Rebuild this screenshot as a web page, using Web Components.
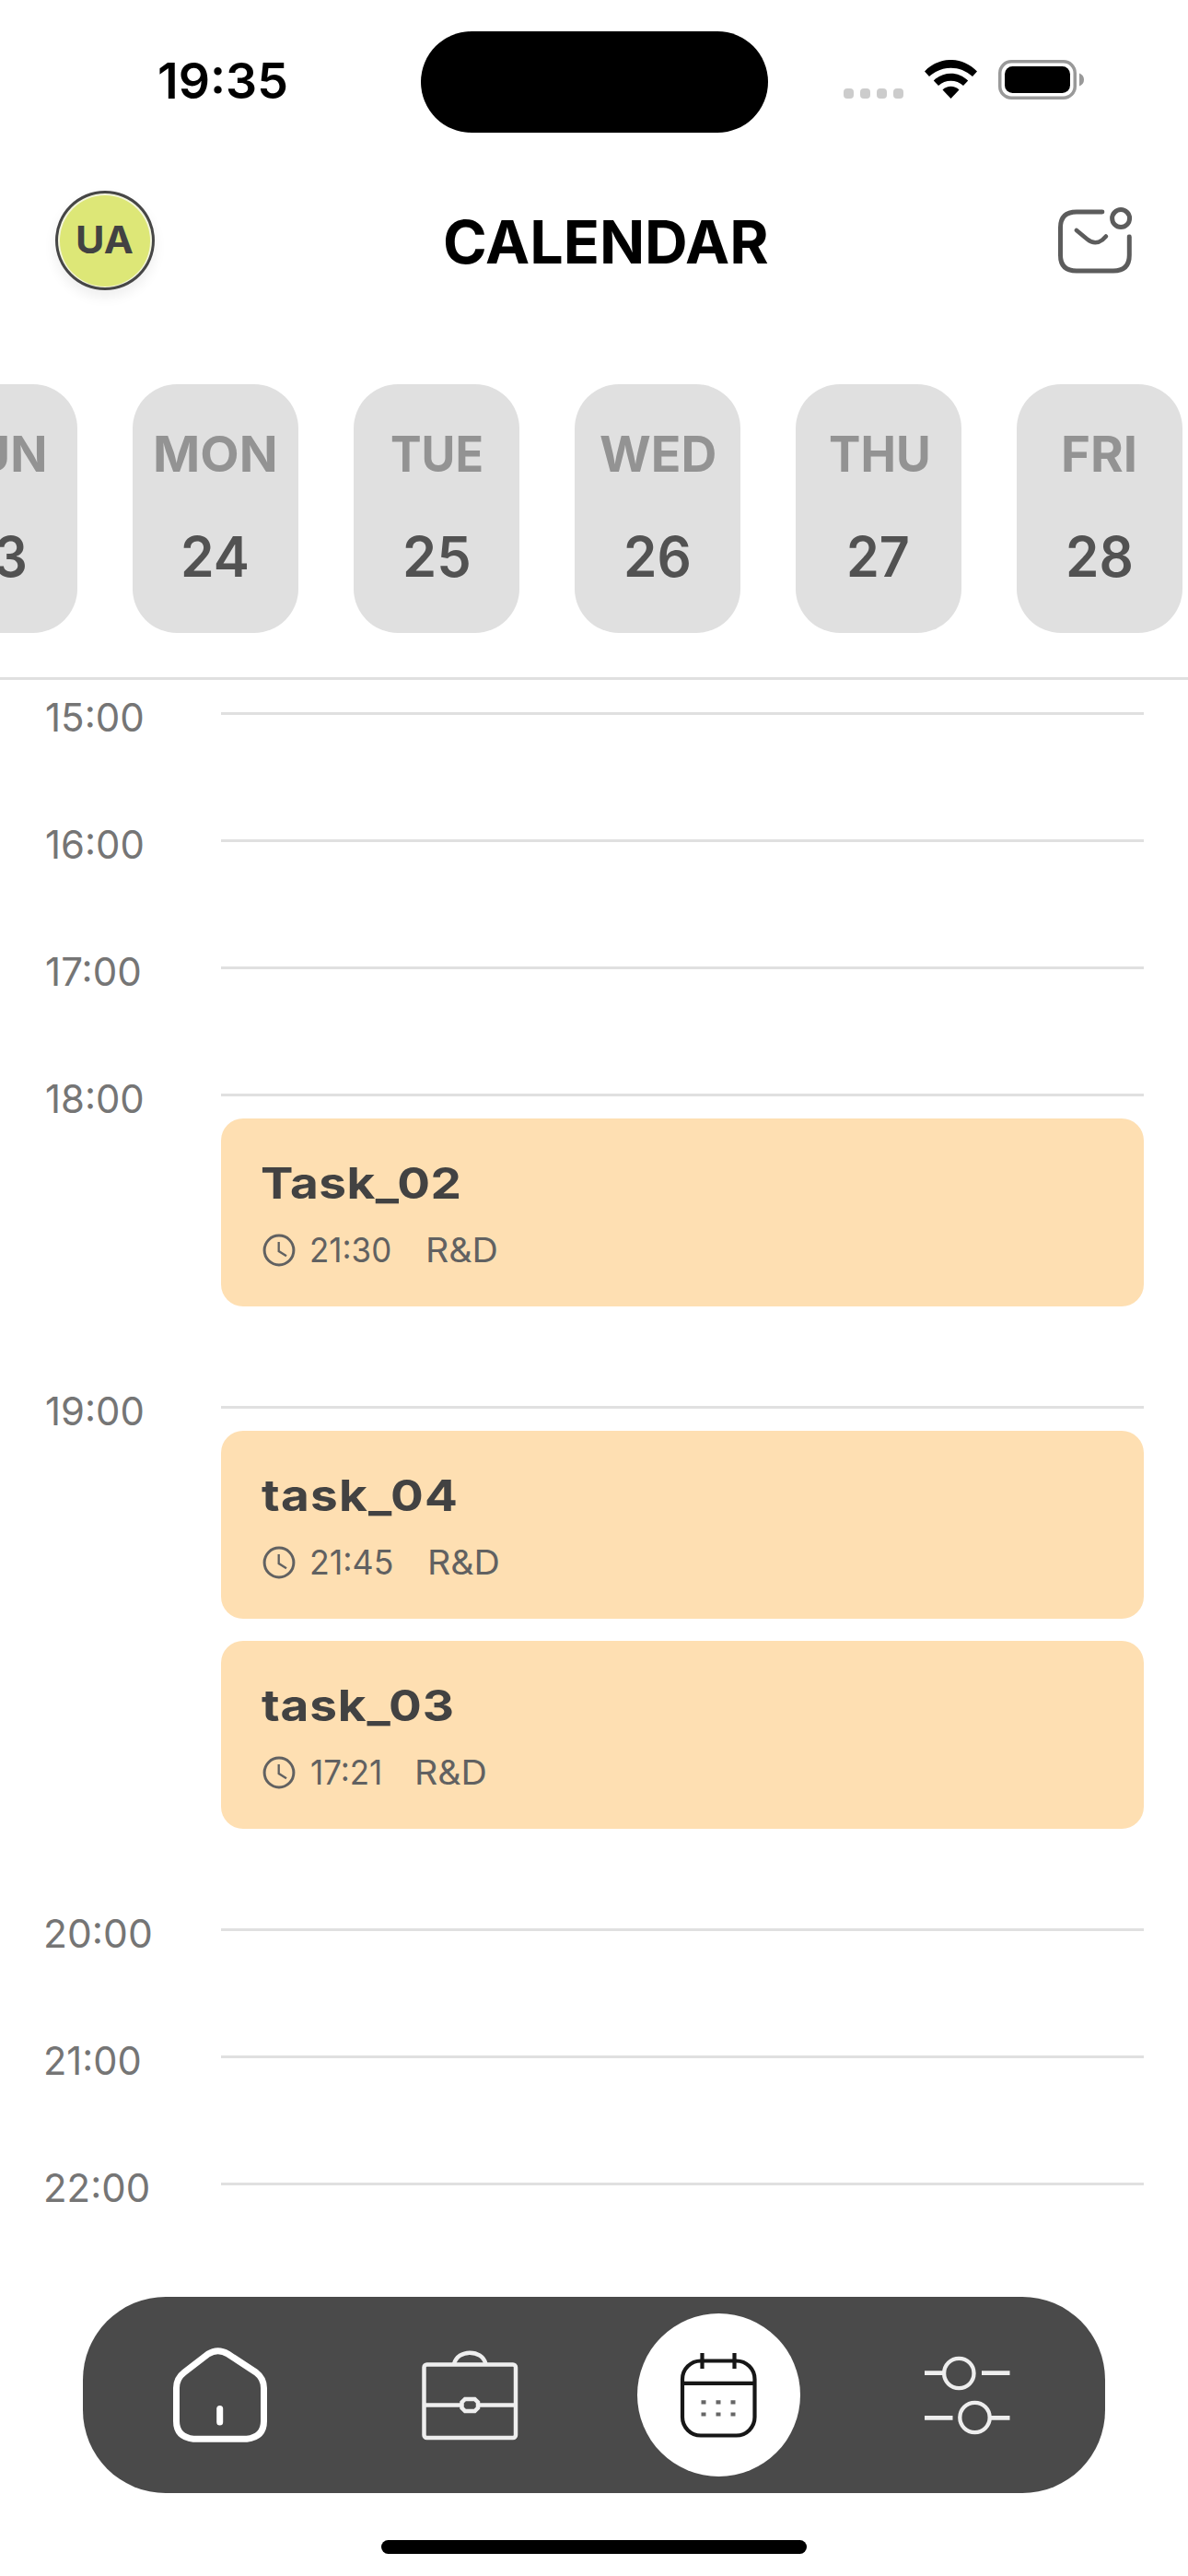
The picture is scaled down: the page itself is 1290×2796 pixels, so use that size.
<!DOCTYPE html>
<html lang="en">
<head>
<meta charset="utf-8">
<title>Calendar</title>
<style>
html,body{margin:0;padding:0;background:#fff}
body{width:1290px;height:2796px;overflow:hidden;font-family:Inter,"Noto Sans",sans-serif;color:#000}
</style>
</head>
<body>
<calendar-screen></calendar-screen>
<script>
const define = (name, html, setup) => {
  const template = document.createElement('template');
  template.innerHTML = html;
  customElements.define(name, class extends HTMLElement {
    connectedCallback() {
      if (this.shadowRoot) return;
      this.attachShadow({ mode: 'open' }).append(template.content.cloneNode(true));
      if (setup) setup(this, this.shadowRoot);
    }
  });
};

// Fits a label so that its visible glyphs span exactly the "w" attribute:
// the glyphs are widened by up to 13%, and tracking takes up the rest.
const ruler = document.createElement('canvas').getContext('2d');
define('fitted-text', `
<style>:host{display:block;white-space:nowrap;line-height:1;flex:none}span{display:block;transform-origin:0 50%}</style>
<span></span>`, (host, root) => {
  const text = host.getAttribute('text'), w = +host.getAttribute('w');
  const span = root.querySelector('span');
  span.textContent = text;
  host.style.width = w + 'px';
  const cs = getComputedStyle(host);
  ruler.font = `${cs.fontWeight} ${cs.fontSize} ${cs.fontFamily}`;
  const m = ruler.measureText(text);
  const ink = m.actualBoundingBoxLeft + m.actualBoundingBoxRight;
  const scale = Math.max(0.94, Math.min(1.13, w / ink));
  span.style.letterSpacing = (w / scale - ink) / (text.length - 1) + 'px';
  span.style.marginLeft = m.actualBoundingBoxLeft * scale + 'px';
  span.style.transform = `scaleX(${scale})`;
});
const fitted = (text, w, cls = '') => {
  const el = document.createElement('fitted-text');
  el.className = cls;
  el.setAttribute('text', text);
  el.setAttribute('w', w);
  return el;
};

define('status-bar', `
<style>
:host{display:flex;height:143px;padding:34px 0 0 173px;align-items:flex-start}
fitted-text{font-size:54px;font-weight:600;margin-top:27px}
.island{width:377px;height:110px;border-radius:55px;background:#000;margin-left:145.5px}
.dots{display:flex;gap:7px;margin:62px 0 0 82.5px}
.dots i{width:11px;height:11px;border-radius:4px;background:#ccc}
.wifi{margin:31px 0 0 23px}.bat{margin:31px 0 0 23px}
svg{display:block}
</style>
<fitted-text text="19:35" w="138"></fitted-text>
<div class="island"></div>
<div class="dots"><i></i><i></i><i></i><i></i></div>
<svg class="wifi" width="57" height="42" viewBox="0 0 57 42">
<path d="M0 12.5C16-4.2 41-4.2 57 12.5L52 18C38.500 5.500 18.500 5.500 5 18Z"/>
<path d="M9.800 22.500C20.500 12 36.500 12 47.200 22.500L42 28C34.500 21 22.500 21 15 28Z"/>
<path d="M19.500 32.500C24.500 27.500 32.500 27.500 37.500 32.500L28.500 42Z"/></svg>
<svg class="bat" width="94" height="43" viewBox="0 0 94 43">
<rect x="1.750" y="1.750" width="81.500" height="39.500" rx="12.500" fill="none" stroke="#999" stroke-width="3.500"/>
<rect x="7" y="7" width="71" height="29" rx="8.500"/>
<path d="M88 14.500Q93 16.500 93 21.500Q93 26.500 88 28.500Z" fill="#999"/></svg>`);

define('user-avatar', `
<style>
:host{display:flex;box-sizing:border-box;width:108px;height:108px;border:3px solid #464646;border-radius:50%;background:#f3f5db;padding:1.5px;box-shadow:0 7px 14px rgba(0,0,0,.07)}
div{flex:1;display:flex;align-items:center;justify-content:center;border-radius:50%;background:#dde777;color:#424242;font-size:41px;font-weight:700}
fitted-text{margin-top:-1px}
</style><div><fitted-text text="UA" w="60"></fitted-text></div>`);

define('app-header', `
<style>
:host{display:flex;box-sizing:border-box;height:240px;padding:30px 60px 0;align-items:flex-start}
.title{font-size:64px;font-weight:700;margin:23.500px 0 0 315px}
svg{display:block;margin:17px 0 0 315px}
</style>
<user-avatar></user-avatar>
<fitted-text class="title" text="CALENDAR" w="350.500"></fitted-text>
<svg width="82" height="74" viewBox="0 0 82 74" fill="none" stroke="#5c5c5c" stroke-width="5" stroke-linecap="round">
<path d="M49 6H21Q3.500 6 3.500 23V53Q3.500 70 21 70H61Q78.500 70 78.500 53V33"/>
<circle cx="69.300" cy="13" r="9.500"/>
<path d="M21 26L32.500 35.500Q41 42.500 49 36.500L53 32.500" stroke-width="4.600"/></svg>`);

define('day-card', `
<style>
:host{display:flex;flex:none;box-sizing:border-box;width:180px;height:270px;border-radius:48px;background:#e0e0e0;flex-direction:column;align-items:center;padding-top:50px}
.d{font-size:53px;font-weight:700;color:#939393}
.n{font-size:60px;font-weight:600;color:#525252;margin-top:54px}
</style>`, (host, root) => {
  const { day, dw, num, nw } = host.dataset;
  root.append(fitted(day, dw, 'd'), fitted(num, nw, 'n'));
});

define('day-strip', `
<style>
:host{display:flex;box-sizing:border-box;height:321px;border-bottom:3px solid #e0e0e0;overflow:hidden}
.row{display:flex;gap:60px;margin-left:-96px}
</style><div class="row">
<day-card data-day="SUN" data-dw="108" data-num="23" data-nw="67"></day-card>
<day-card data-day="MON" data-dw="129" data-num="24" data-nw="70"></day-card>
<day-card data-day="TUE" data-dw="98" data-num="25" data-nw="69"></day-card>
<day-card data-day="WED" data-dw="124" data-num="26" data-nw="68.500"></day-card>
<day-card data-day="THU" data-dw="107" data-num="27" data-nw="64.500"></day-card>
<day-card data-day="FRI" data-dw="77" data-num="28" data-nw="68.500"></day-card>
</div>`);

define('task-card', `
<style>
:host{display:block;box-sizing:border-box;height:204px;border-radius:24px;background:#fedfb2;padding:46px 44px 0}
.t{font-size:47px;font-weight:700;color:#424242}
.m{display:flex;align-items:flex-start;margin-top:31px;color:#616161;font-size:37px}
svg{display:block;margin:1px 17px 0 1px}
.g{width:41px}
</style><div class="t"></div>
<div class="m"><svg width="36" height="36" viewBox="0 0 36 36" fill="none" stroke="#616161"><circle cx="18" cy="18" r="15.900" stroke-width="3"/><path d="M17.700 9V19L26 24.300" stroke-width="2.300"/></svg></div>`,
(host, root) => {
  const d = host.dataset, gap = document.createElement('span');
  gap.className = 'g';
  root.querySelector('.t').append(fitted(d.title, d.tw));
  root.querySelector('.m').append(fitted(d.time, d.mw), gap, fitted('R&D', 74));
});

define('hour-slot', `
<style>
:host{display:flex;padding-left:50px}
.l{width:190px;flex:none;font-size:42.500px;color:#757575;margin-top:-15px;height:44px}
.b{width:1002px;box-sizing:border-box;border-top:3px solid #e0e0e0;min-height:138px}
.c{display:flex;flex-direction:column;gap:24px}
:host([busy]) .c{padding:24px 0 108px}
</style><div class="l"></div><div class="b"><div class="c"><slot></slot></div></div>`, (host, root) => {
  root.querySelector('.l').append(fitted(host.getAttribute('hour'), host.getAttribute('w')));
});

define('day-timeline', `
<style>:host{display:block;box-sizing:border-box;height:1755px;padding-top:35px;overflow:hidden}</style>
<hour-slot hour="15:00" w="105"></hour-slot>
<hour-slot hour="16:00" w="105"></hour-slot>
<hour-slot hour="17:00" w="102"></hour-slot>
<hour-slot hour="18:00" w="105" busy><task-card data-title="Task_02" data-tw="215" data-time="21:30" data-mw="86"></task-card></hour-slot>
<hour-slot hour="19:00" w="105" busy>
<task-card data-title="task_04" data-tw="211" data-time="21:45" data-mw="88"></task-card>
<task-card data-title="task_03" data-tw="207.500" data-time="17:21" data-mw="74.500"></task-card></hour-slot>
<hour-slot hour="20:00" w="114"></hour-slot>
<hour-slot hour="21:00" w="102"></hour-slot>
<hour-slot hour="22:00" w="111.500"></hour-slot>`);

define('tab-item', `
<style>
:host{display:flex;flex:1;align-items:center;justify-content:center}
div{width:177px;height:177px;border-radius:50%;display:flex;align-items:center;justify-content:center}
:host([active]) div{background:#fff}
</style><div><slot></slot></div>`);

define('tab-bar', `
<style>
:host{display:flex;box-sizing:border-box;height:213px;margin:0 90px;padding:0 15px;border-radius:90px;background:#4a4a4a}
svg{display:block;width:120px;height:120px;fill:none;stroke:#eee;stroke-width:4.800}
</style>
<tab-item><svg viewBox="0 0 120 120" stroke-linecap="round" stroke-linejoin="round" style="stroke:#fff;stroke-width:7">
<path d="M30 107.300Q11.500 105 11.500 88V52Q11.500 41.500 20 35L46 15Q56.500 8.500 67.500 15L98 35Q106.500 41.500 106.500 52V88Q106.500 105 88 107.300Z"/><path d="M58.700 74.500V89"/></svg></tab-item>
<tab-item><svg viewBox="0 0 120 120" style="stroke-width:4.500">
<rect x="10.500" y="26.500" width="99.500" height="79.500" rx="3"/><path d="M43 26C47 9.500 73.500 9.500 77.500 26M10.500 70.500H51M69.500 70.500H110"/>
<path d="M55 64H65.500L69 67.500V73.500L65.500 77H55L51.500 73.500V67.500Z"/></svg></tab-item>
<tab-item active><svg viewBox="0 0 120 120" style="stroke:#171717;stroke-width:4.200">
<rect x="21" y="22.500" width="78.500" height="81" rx="20"/><path d="M21 46.800H99.500M42.500 14V31M77.500 14V31"/>
<path d="M41.500 67.300h5M57.500 67.300h5M73.500 67.300h5M41.500 80.500h5M57.500 80.500h5M73.500 80.500h5" style="stroke:#666"/></svg></tab-item>
<tab-item><svg viewBox="0 0 120 120">
<circle cx="51.300" cy="36" r="16.200" style="stroke-width:4.300"/><circle cx="68.500" cy="84" r="16.200" style="stroke-width:4.300"/>
<path d="M14 35.700H35M76 35.700H106.500M14 84.300H44.500M85 84.300H106.500"/></svg></tab-item>`);

define('calendar-screen', `
<style>
:host{display:flex;flex-direction:column;width:1290px;height:2796px;background:#fff;overflow:hidden}
.home{width:462px;height:15px;border-radius:8px;background:#000;margin:51px auto 0}
</style>
<status-bar></status-bar><app-header></app-header><day-strip></day-strip>
<day-timeline></day-timeline><tab-bar></tab-bar><div class="home"></div>`);
</script>
</body>
</html>
